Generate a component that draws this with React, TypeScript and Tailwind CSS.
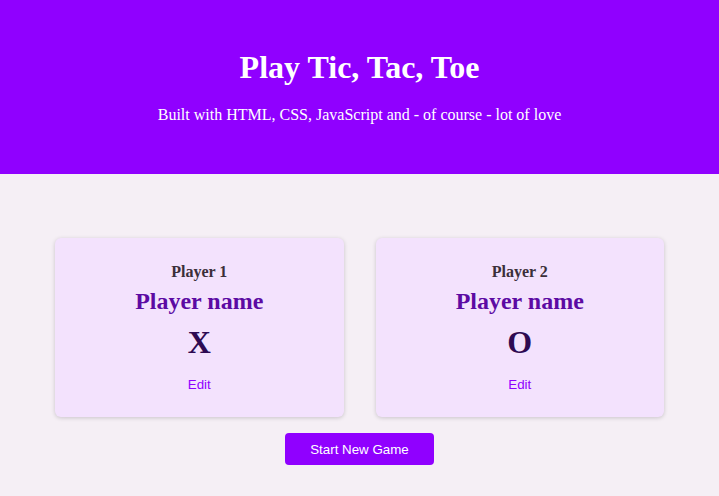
import { useState } from "react";

type Player = {
  label: string;
  name: string;
  symbol: string;
};

const players: Player[] = [
  { label: "Player 1", name: "Player name", symbol: "X" },
  { label: "Player 2", name: "Player name", symbol: "O" },
];

function PlayerCard({ player }: { player: Player }) {
  return (
    <li className="flex flex-col items-center rounded-md bg-[#f3e2fd] pt-6 pb-6 shadow-[0_1px_4px_rgba(0,0,0,0.18)]">
      <h2 className="text-[16px] font-bold leading-[20px] text-[#3b2f3a]">
        {player.label}
      </h2>
      <h3 className="mt-[5px] text-[24px] font-bold leading-[28px] text-[#5c0aa3]">
        {player.name}
      </h3>
      <p className="mt-[7px] text-[32px] font-bold leading-[40px] text-[#2e0a52]">
        {player.symbol}
      </p>
      <button className="mt-[15px] font-['Liberation_Sans',Arial,sans-serif] text-[13.33px] leading-[16px] text-[#9000ff] cursor-pointer">
        Edit
      </button>
    </li>
  );
}

export default function App() {
  const [started, setStarted] = useState(false);

  return (
    <div className="min-h-[496px] bg-[#f5eff5] font-['Liberation_Serif','Times_New_Roman',serif]">
      <header className="bg-[#9000ff] pt-[47px] pb-[47px] text-center text-white">
        <h1 className="text-[32px] font-bold leading-[40px]">
          Play Tic, Tac, Toe
        </h1>
        <p className="mt-4 text-[16px] leading-[24px]">
          Built with HTML, CSS, JavaScript and - of course - lot of love
        </p>
      </header>

      <main className="flex flex-col items-center pt-[64px]">
        <ol className="grid w-[609px] grid-cols-2 gap-8">
          {players.map((p) => (
            <PlayerCard key={p.label} player={p} />
          ))}
        </ol>
        <button
          onClick={() => setStarted(!started)}
          className="mt-4 h-8 w-[149px] rounded bg-[#9000ff] pt-px font-['Liberation_Sans',Arial,sans-serif] text-[13.33px] text-white cursor-pointer"
        >
          Start New Game
        </button>
      </main>
    </div>
  );
}
